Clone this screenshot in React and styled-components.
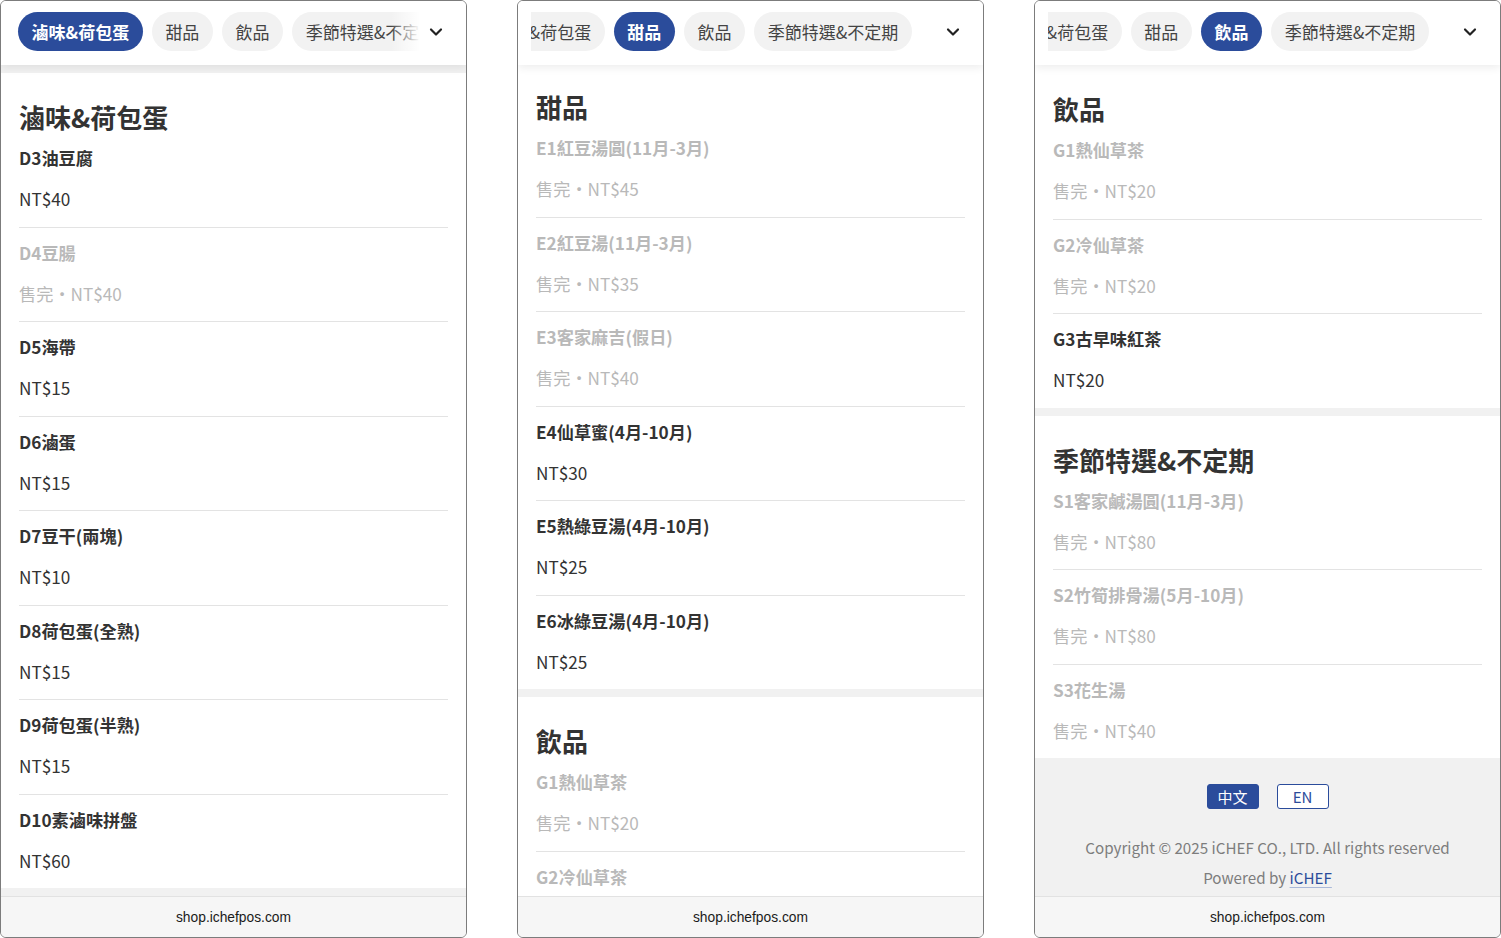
import React, { useLayoutEffect, useRef } from "react";
import styled, { createGlobalStyle } from "styled-components";
import { ChevronDown } from "lucide-react";

const BLUE = "#2b4c9b";
const CATEGORIES = ["滷味&荷包蛋", "甜品", "飲品", "季節特選&不定期"];

const GlobalStyle = createGlobalStyle`
  html, body {
    margin: 0;
    padding: 0;
    background: #fff;
  }
  body {
    font-family: "Noto Sans CJK TC", "Noto Sans", sans-serif;
    color: #333;
  }
  * { box-sizing: border-box; }
`;

const Page = styled.div`
  display: flex;
  gap: 50px;
  width: 1501px;
  height: 938px;
`;

const Phone = styled.div`
  width: 467px;
  height: 938px;
  border: 1px solid #7c7c7c;
  border-radius: 6px;
  overflow: hidden;
  display: flex;
  flex-direction: column;
  background: #fff;
`;

const Nav = styled.div`
  position: relative;
  z-index: 2;
  flex: 0 0 64px;
  display: flex;
  align-items: center;
  padding: 0 20px 3px 13px;
  background: #fff;
  box-shadow: 0 3px 8px rgba(0, 0, 0, 0.07);
`;

const ChipWrap = styled.div`
  position: relative;
  flex: 1;
  min-width: 0;
`;

const ChipScroller = styled.div`
  display: flex;
  gap: 9px;
  overflow-x: auto;
  padding: 0 30px 0 4px;
  scrollbar-width: none;
  &::-webkit-scrollbar { display: none; }
`;

const Fade = styled.div`
  position: absolute;
  top: 0;
  right: 0;
  width: 34px;
  height: 100%;
  background: linear-gradient(to right, rgba(255, 255, 255, 0), #fff 85%);
  pointer-events: none;
`;

const Chip = styled.div`
  flex: 0 0 auto;
  height: 39px;
  padding: 0 13.6px;
  border-radius: 20px;
  display: flex;
  align-items: center;
  font-size: 17px;
  white-space: nowrap;
  background: ${(p) => (p.$active ? BLUE : "#f2f2f2")};
  color: ${(p) => (p.$active ? "#fff" : "#444")};
  font-weight: ${(p) => (p.$active ? 700 : 400)};
`;

const Chevron = styled.div`
  flex: 0 0 20px;
  display: flex;
  justify-content: center;
  align-items: center;
  margin-left: 1px;
  color: #222;
`;

const Content = styled.div`
  flex: 1;
  overflow: hidden;
  display: flex;
  flex-direction: column;
  & > :first-child {
    margin-top: ${(p) => p.$shift || 0}px;
  }
`;

const Band = styled.div`
  flex: 0 0 8px;
  background: #f1f1f1;
`;

const Section = styled.section`
  padding: 28px 18px 0;
  flex: 0 0 auto;
`;

const SectionTitle = styled.h2`
  margin: 0;
  font-size: 26px;
  line-height: 32px;
  font-weight: 700;
  color: #333;
`;

const Item = styled.div`
  padding: 12px 0 14.5px;
  display: flex;
  flex-direction: column;
  gap: 15px;
  border-bottom: 1px solid #e3e3e3;
  &:last-child {
    border-bottom: none;
  }
`;

const ItemName = styled.div`
  font-size: 17.2px;
  line-height: 26px;
  font-weight: 700;
  color: ${(p) => (p.$sold ? "#b9b9b9" : "#333")};
`;

const ItemPrice = styled.div`
  font-size: 17.2px;
  line-height: 26px;
  color: ${(p) => (p.$sold ? "#b9b9b9" : "#333")};
`;

const Footer = styled.footer`
  flex: 1;
  background: #f1f1f1;
  display: flex;
  flex-direction: column;
  align-items: center;
  padding-top: 26px;
`;

const LangRow = styled.div`
  display: flex;
  gap: 18px;
  margin-bottom: 23px;
`;

const LangButton = styled.div`
  width: 52px;
  height: 25px;
  border: 1px solid ${BLUE};
  border-radius: 3px;
  display: flex;
  align-items: center;
  justify-content: center;
  font-size: 15px;
  background: ${(p) => (p.$active ? BLUE : "#fff")};
  color: ${(p) => (p.$active ? "#fff" : BLUE)};
`;

const FooterLine = styled.div`
  font-size: 15.2px;
  line-height: 30px;
  color: #7d7d7d;
`;

const Link = styled.span`
  color: ${BLUE};
  text-decoration: underline;
  text-decoration-color: #a9b8d8;
  text-underline-offset: 3px;
`;

const AddressBar = styled.div`
  flex: 0 0 41px;
  border-top: 1px solid #e2e2e2;
  background: #f6f6f6;
  display: flex;
  align-items: center;
  justify-content: center;
  padding-top: 1px;
  font-family: "Liberation Sans", Arial, sans-serif;
  font-size: 13.8px;
  color: #1a1a1a;
`;

function CategoryNav({ active, scrolled }) {
  const ref = useRef(null);
  useLayoutEffect(() => {
    if (scrolled && ref.current) {
      ref.current.scrollLeft = ref.current.scrollWidth;
    }
  }, [scrolled]);

  return (
    <Nav>
      <ChipWrap>
        <ChipScroller ref={ref}>
          {CATEGORIES.map((c, i) => (
            <Chip key={c} $active={i === active}>
              {c}
            </Chip>
          ))}
        </ChipScroller>
        {!scrolled && <Fade />}
      </ChipWrap>
      <Chevron>
        <ChevronDown size={20} strokeWidth={2.6} />
      </Chevron>
    </Nav>
  );
}

function MenuSection({ title, items }) {
  return (
    <Section>
      <SectionTitle>{title}</SectionTitle>
      {items.map(([name, price, sold]) => (
        <Item key={name}>
          <ItemName $sold={sold}>{name}</ItemName>
          <ItemPrice $sold={sold}>
            {sold ? `售完・NT$${price}` : `NT$${price}`}
          </ItemPrice>
        </Item>
      ))}
    </Section>
  );
}

const braised = [
  ["D3油豆腐", 40],
  ["D4豆腸", 40, true],
  ["D5海帶", 15],
  ["D6滷蛋", 15],
  ["D7豆干(兩塊)", 10],
  ["D8荷包蛋(全熟)", 15],
  ["D9荷包蛋(半熟)", 15],
  ["D10素滷味拼盤", 60],
];

const desserts = [
  ["E1紅豆湯圓(11月-3月)", 45, true],
  ["E2紅豆湯(11月-3月)", 35, true],
  ["E3客家麻吉(假日)", 40, true],
  ["E4仙草蜜(4月-10月)", 30],
  ["E5熱綠豆湯(4月-10月)", 25],
  ["E6冰綠豆湯(4月-10月)", 25],
];

const drinks = [
  ["G1熱仙草茶", 20, true],
  ["G2冷仙草茶", 20, true],
  ["G3古早味紅茶", 20],
];

const seasonal = [
  ["S1客家鹹湯圓(11月-3月)", 80, true],
  ["S2竹筍排骨湯(5月-10月)", 80, true],
  ["S3花生湯", 40, true],
];

function Address() {
  return <AddressBar>shop.ichefpos.com</AddressBar>;
}

export default function App() {
  return (
    <>
      <GlobalStyle />
      <Page>
        <Phone>
          <CategoryNav active={0} />
          <Content>
            <Band />
            <MenuSection title="滷味&荷包蛋" items={braised} />
            <Band />
          </Content>
          <Address />
        </Phone>

        <Phone>
          <CategoryNav active={1} scrolled />
          <Content $shift={-2}>
            <MenuSection title="甜品" items={desserts} />
            <Band />
            <MenuSection title="飲品" items={drinks} />
          </Content>
          <Address />
        </Phone>

        <Phone>
          <CategoryNav active={2} scrolled />
          <Content $shift={0}>
            <MenuSection title="飲品" items={drinks} />
            <Band />
            <MenuSection title="季節特選&不定期" items={seasonal} />
            <Footer>
              <LangRow>
                <LangButton $active>中文</LangButton>
                <LangButton>EN</LangButton>
              </LangRow>
              <FooterLine>Copyright © 2025 iCHEF CO., LTD. All rights reserved</FooterLine>
              <FooterLine>
                Powered by <Link>iCHEF</Link>
              </FooterLine>
            </Footer>
          </Content>
          <Address />
        </Phone>
      </Page>
    </>
  );
}
